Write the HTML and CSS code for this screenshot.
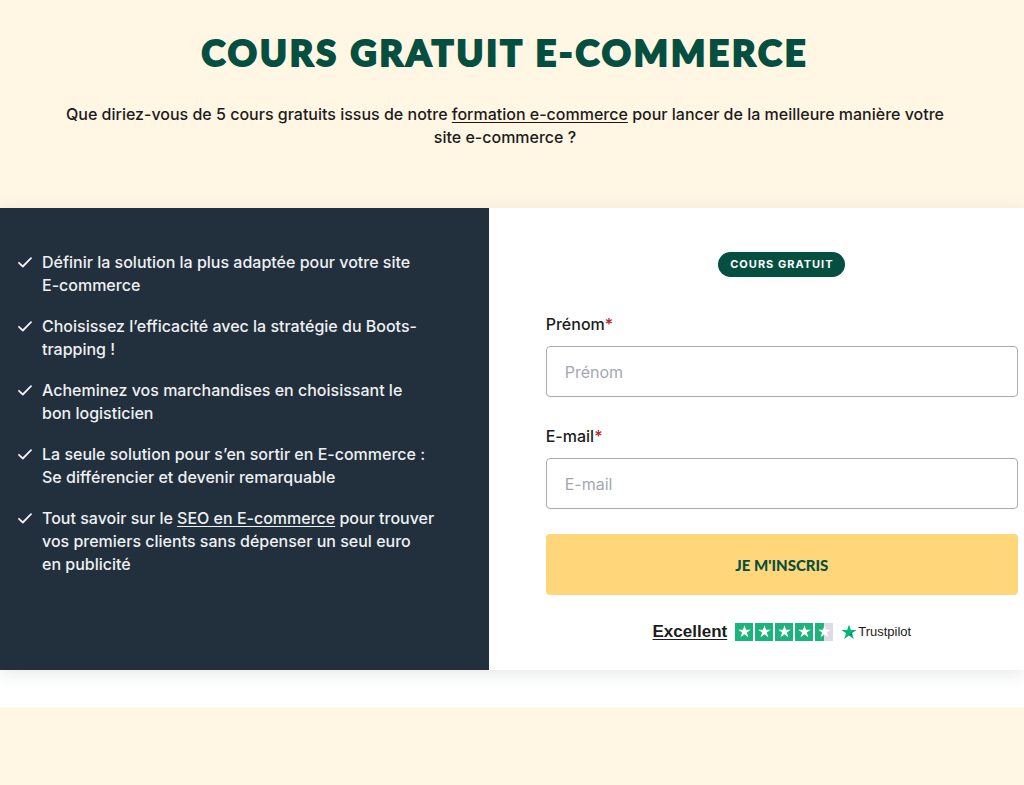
FILE: index.html
```
<!DOCTYPE html>
<html lang="fr">
<head>
<meta charset="utf-8">
<meta name="viewport" content="width=device-width, initial-scale=1">
<title>Cours gratuit e-commerce</title>
<link rel="stylesheet" href="styles.css">
</head>
<body>

<!-- Shared shapes -->
<svg class="sprite" aria-hidden="true">
  <symbol id="check" viewBox="0 0 14 11">
    <path d="M1 5.8 L4.8 9.5 L13 1.2" fill="none" stroke="currentColor" stroke-width="1.8" stroke-linecap="round" stroke-linejoin="round"/>
  </symbol>
  <symbol id="star" viewBox="0 0 20 20">
    <path d="M10 0.5 L12.3 7.4 H19.6 L13.7 11.7 L16 18.7 L10 14.4 L4 18.7 L6.3 11.7 L0.4 7.4 H7.7 Z" fill="currentColor"/>
  </symbol>
</svg>

<header class="intro">
  <h1>Cours gratuit e-commerce</h1>
  <p>Que diriez-vous de 5 cours gratuits issus de notre <a href="#">formation e-commerce</a> pour lancer de la meilleure manière votre site e-commerce&nbsp;?</p>
</header>

<main class="panel">
  <section class="benefits">
    <ul>
      <li><svg class="check"><use href="#check"/></svg><span>Définir la solution la plus adaptée pour votre site<br>E-commerce</span></li>
      <li><svg class="check"><use href="#check"/></svg><span>Choisissez l’efficacité avec la stratégie du Boots-<br>trapping&nbsp;!</span></li>
      <li><svg class="check"><use href="#check"/></svg><span>Acheminez vos marchandises en choisissant le<br>bon logisticien</span></li>
      <li><svg class="check"><use href="#check"/></svg><span>La seule solution pour s’en sortir en E-commerce&nbsp;:<br>Se différencier et devenir remarquable</span></li>
      <li><svg class="check"><use href="#check"/></svg><span>Tout savoir sur le <a href="#">SEO en E-commerce</a> pour trouver<br>vos premiers clients sans dépenser un seul euro<br>en publicité</span></li>
    </ul>
  </section>

  <form class="signup">
    <span class="badge">Cours gratuit</span>

    <label for="prenom">Prénom<span class="required">*</span></label>
    <input type="text" id="prenom" name="prenom" placeholder="Prénom" required>

    <label for="email">E-mail<span class="required">*</span></label>
    <input type="email" id="email" name="email" placeholder="E-mail" required>

    <button type="submit">Je m'inscris</button>

    <div class="rating">
      <a href="#">Excellent</a>
      <div class="stars">
        <span class="star"><svg><use href="#star"/></svg></span>
        <span class="star"><svg><use href="#star"/></svg></span>
        <span class="star"><svg><use href="#star"/></svg></span>
        <span class="star"><svg><use href="#star"/></svg></span>
        <span class="star half"><svg><use href="#star"/></svg></span>
      </div>
      <div class="trustpilot">
        <svg viewBox="0 0 20 20">
          <path d="M10 0.5 L12.3 7.4 H19.6 L13.7 11.7 L16 18.7 L10 14.4 L4 18.7 L6.3 11.7 L0.4 7.4 H7.7 Z" fill="#00b67a"/>
          <path d="M14.2 13.2 L13.7 11.7 L10 14.4 Z" fill="#005128"/>
        </svg>
        <span>Trustpilot</span>
      </div>
    </div>
  </form>
</main>

<div class="next-section"></div>

</body>
</html>
```

FILE: styles.css
```
* {
  box-sizing: border-box;
}

body {
  margin: 0;
  min-height: 100vh;
  display: flex;
  flex-direction: column;
  background-color: #fff;
  color: #1c1c1c;
  font-family: Inter, Roboto, sans-serif;
  font-size: 16px;
  font-weight: 500;
  line-height: 23px;
}

a {
  color: inherit;
  text-underline-offset: 2px;
}

.sprite {
  display: none;
}

/* Heading */
.intro {
  padding: 30px 70px 59px 56px;
  background-color: #fff6e4;
  text-align: center;
}

h1 {
  margin: 0 0 29px;
  color: #054f40;
  font-family: Lato, sans-serif;
  font-size: 36px;
  font-weight: 900;
  line-height: 44px;
  letter-spacing: 3px;
  text-transform: uppercase;
  -webkit-text-stroke: 2px #054f40;
}

.intro p {
  margin: 0;
}

/* Two columns */
.panel {
  display: grid;
  grid-template-columns: 21fr 23fr;
  background-color: #fff;
  box-shadow: 0 4px 16px rgba(30, 45, 60, 0.1);
}

.benefits {
  padding: 43px 32px 48px 18px;
  background-color: #222f3c;
  color: #eef1f3;
}

.benefits ul {
  display: flex;
  flex-direction: column;
  gap: 18px;
  margin: 0;
  padding: 0;
  list-style: none;
}

.benefits li {
  display: flex;
  gap: 10px;
}

.check {
  flex: none;
  width: 14px;
  height: 11px;
  margin-top: 6px;
}

/* Form */
.signup {
  display: flex;
  flex-direction: column;
  padding: 44px 6px 27px 57px;
}

.badge {
  align-self: center;
  margin-bottom: 36px;
  padding: 1px 12px;
  border-radius: 13px;
  background-color: #054f40;
  color: #fff;
  font-size: 11px;
  font-weight: 700;
  letter-spacing: 1px;
  text-transform: uppercase;
}

label {
  margin-bottom: 10px;
}

.required {
  color: #b3261e;
}

input {
  width: 100%;
  height: 51px;
  margin-bottom: 28px;
  padding: 0 18px;
  border: 1px solid #a9abae;
  border-radius: 4px;
  background-color: #fff;
  color: #1c1c1c;
  font: inherit;
  font-weight: 400;
}

input::placeholder {
  color: #a3a8b2;
}

#email {
  margin-bottom: 25px;
}

button {
  height: 61px;
  border: none;
  border-radius: 4px;
  background-color: #ffd77a;
  color: #054f40;
  font-family: Lato, sans-serif;
  font-size: 15px;
  font-weight: 900;
  text-transform: uppercase;
  cursor: pointer;
}

.rating {
  display: flex;
  justify-content: center;
  align-items: center;
  gap: 8px;
  margin-top: 25px;
  font-family: "Liberation Sans", Arial, sans-serif;
}

.rating a {
  font-size: 17px;
  font-weight: 700;
}

.stars {
  display: flex;
  gap: 2px;
}

.star {
  display: flex;
  justify-content: center;
  align-items: center;
  width: 18px;
  height: 18px;
  background-color: #1cb37c;
  color: #fff;
}

.star svg {
  width: 13px;
  height: 13px;
}

.star.half {
  background: linear-gradient(to right, #1cb37c 50%, #dcdce6 50%);
}

.trustpilot {
  display: flex;
  align-items: center;
  gap: 1px;
  font-size: 13px;
}

.trustpilot svg {
  width: 16px;
  height: 16px;
}

.next-section {
  flex: 1;
  min-height: 78px;
  margin-top: 37px;
  background-color: #fff6e4;
}

@media (max-width: 700px) {
  .panel {
    grid-template-columns: 1fr;
  }

  .signup {
    padding: 32px 18px 24px;
  }
}
```
